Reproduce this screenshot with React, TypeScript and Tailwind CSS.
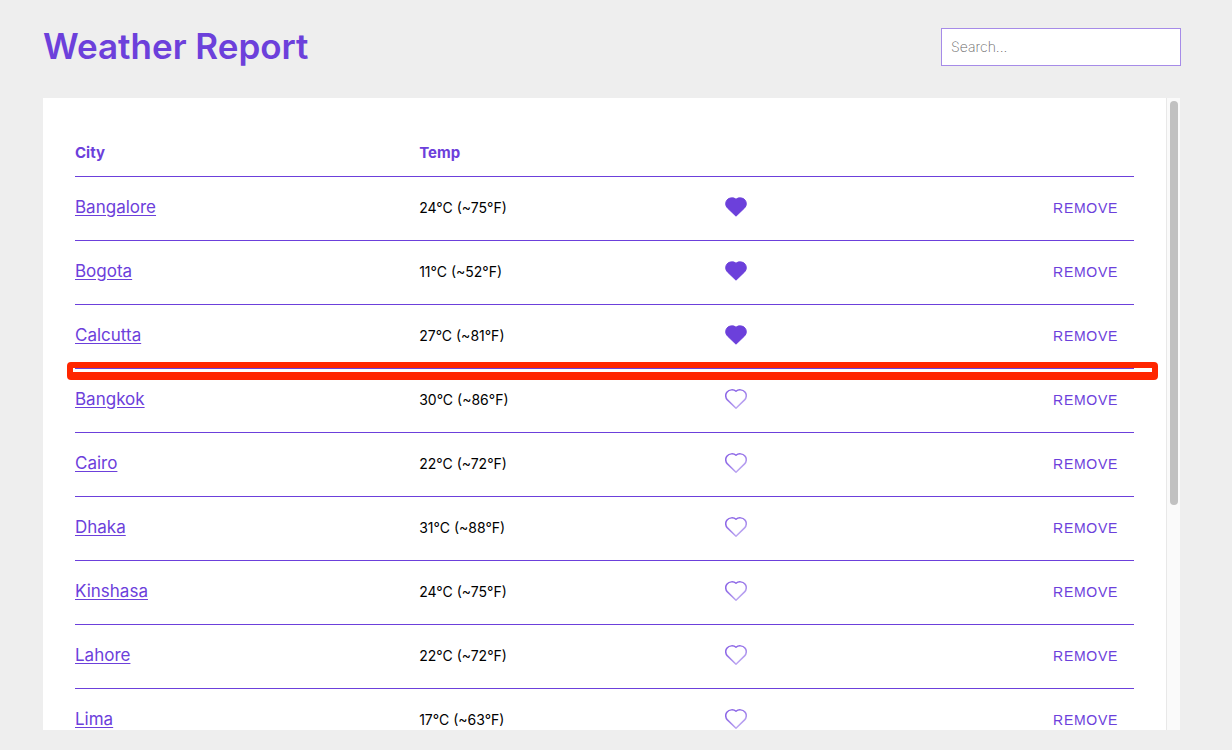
import { useState } from "react";

type City = { name: string; temp: string; favourite: boolean };

const initialCities: City[] = [
  { name: "Bangalore", temp: "24°C (~75°F)", favourite: true },
  { name: "Bogota", temp: "11°C (~52°F)", favourite: true },
  { name: "Calcutta", temp: "27°C (~81°F)", favourite: true },
  { name: "Bangkok", temp: "30°C (~86°F)", favourite: false },
  { name: "Cairo", temp: "22°C (~72°F)", favourite: false },
  { name: "Dhaka", temp: "31°C (~88°F)", favourite: false },
  { name: "Kinshasa", temp: "24°C (~75°F)", favourite: false },
  { name: "Lahore", temp: "22°C (~72°F)", favourite: false },
  { name: "Lima", temp: "17°C (~63°F)", favourite: false },
];

function Heart({ filled }: { filled: boolean }) {
  return (
    <svg viewBox="0 0 22 20" className="block h-5 w-[22px]" aria-hidden="true">
      <defs>
        <linearGradient id="heart-fade" x1="0" y1="0" x2="0.7" y2="1">
          <stop offset="0.3" stopColor="#8c66e6" />
          <stop offset="1" stopColor="#c3b0f3" />
        </linearGradient>
      </defs>
      <path
        d="M11 19.2 L2.4 10.9 C0.2 8.6 0.2 5 2.1 2.9 C4.2 0.5 8.6 0.1 11 2.3 C13.4 0.1 17.8 0.5 19.9 2.9 C21.8 5 21.8 8.6 19.6 10.9 Z"
        fill={filled ? "#6c40db" : "none"}
        stroke={filled ? "#6c40db" : "url(#heart-fade)"}
        strokeWidth={filled ? 1 : 1.5}
        strokeLinejoin="round"
      />
    </svg>
  );
}

function CityRow({
  city,
  outlined,
  onToggle,
  onRemove,
}: {
  city: City;
  outlined: boolean;
  onToggle: () => void;
  onRemove: () => void;
}) {
  return (
    <tr className="relative h-16">
      <td className="border-b border-[#6c40db] p-0 pb-0.5">
        <a href={"#" + city.name.toLowerCase()} className="text-[17px] text-[#6c40db] underline underline-offset-2">
          {city.name}
        </a>
      </td>
      <td className="border-b border-[#6c40db] p-0 pb-0.5 text-sm text-black">{city.temp}</td>
      <td className="border-b border-[#6c40db] p-0 pb-1">
        <button type="button" aria-label={"Favourite " + city.name} aria-pressed={city.favourite} onClick={onToggle} className="block">
          <Heart filled={city.favourite} />
        </button>
      </td>
      <td className="border-b border-[#6c40db] p-0 pb-0.5">
        <button
          type="button"
          onClick={onRemove}
          className="ml-auto block px-4 font-['Liberation_Sans',Arial,sans-serif] text-sm tracking-wider text-[#6c40db] uppercase"
        >
          Remove
        </button>
        {outlined && (
          <span className="pointer-events-none absolute -right-6 -bottom-[11px] -left-2 h-[18px] rounded border-x-[6px] border-t-[6px] border-b-8 border-[#ff2600]" />
        )}
      </td>
    </tr>
  );
}

export default function App() {
  const [cities, setCities] = useState(initialCities);
  const [query, setQuery] = useState("");
  const visible = cities.filter((c) => c.name.toLowerCase().includes(query.toLowerCase()));
  const lastFavourite = visible.filter((c) => c.favourite).pop();

  return (
    <div className="flex h-screen flex-col bg-[#eeeeee] pt-7 pr-[52px] pb-5 pl-[43px] font-['Inter',sans-serif]">
      <header className="-mr-px mb-8 flex items-center justify-between">
        <h1 className="pb-0.5 text-[35px] leading-9 font-semibold text-[#6c40db]">Weather Report</h1>
        <input
          type="search"
          aria-label="Search cities"
          placeholder="Search..."
          value={query}
          onChange={(e) => setQuery(e.target.value)}
          className="h-[38px] w-60 border border-[#a68be8] bg-white px-[9px] pb-0.5 text-sm font-extralight text-black outline-none placeholder:text-[#666666]"
        />
      </header>

      <main className="flex min-h-0 flex-1 bg-white">
        <div className="min-w-0 flex-1 overflow-y-auto p-8 [scrollbar-width:none]">
          <table className="w-full table-fixed border-separate border-spacing-0 text-left">
            <thead>
              <tr className="h-[47px] text-[15px] text-[#6c40db]">
                <th className="w-[32.5%] border-b border-[#6c40db] p-0 font-bold">City</th>
                <th className="w-[28.9%] border-b border-[#6c40db] p-0 font-bold">Temp</th>
                <th className="w-[19%] border-b border-[#6c40db] p-0" aria-label="Favourite" />
                <th className="border-b border-[#6c40db] p-0" aria-label="Actions" />
              </tr>
            </thead>
            <tbody>
              {visible.map((city) => (
                <CityRow
                  key={city.name}
                  city={city}
                  outlined={city === lastFavourite}
                  onToggle={() =>
                    setCities(cities.map((c) => (c === city ? { ...c, favourite: !c.favourite } : c)))
                  }
                  onRemove={() => setCities(cities.filter((c) => c !== city))}
                />
              ))}
            </tbody>
          </table>
        </div>
        <div className="flex w-3.5 flex-col border-l border-[#e8e8e8] bg-[#fafafa] py-[3px] pr-0.5 pl-[3px]" aria-hidden="true">
          <div className="h-[64.5%] rounded-full bg-[#c1c1c1]" />
        </div>
      </main>
    </div>
  );
}
